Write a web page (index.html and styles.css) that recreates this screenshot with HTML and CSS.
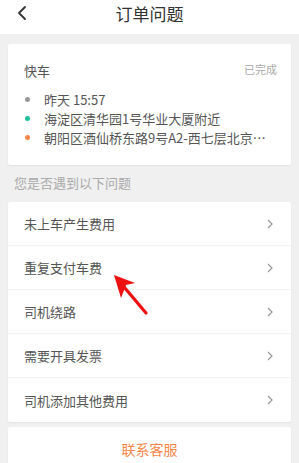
FILE: index.html
```html
<!DOCTYPE html>
<html lang="zh">
<head>
<meta charset="utf-8">
<link rel="stylesheet" href="styles.css">
</head>
<body>
<div class="page">
  <header class="topbar">
    <svg class="back" width="12" height="16" viewBox="0 0 12 16"><path d="M9 2 L3 8 L9 14" fill="none" stroke="#333" stroke-width="1.8" stroke-linecap="round" stroke-linejoin="round"/></svg>
    <h1 class="title">订单问题</h1>
  </header>
  <main class="main">
    <section class="card order">
      <div class="order-head">
        <span class="order-type">快车</span>
        <span class="order-status">已完成</span>
      </div>
      <ul class="order-info">
        <li><span class="dot dot-gray"></span>昨天 15:57</li>
        <li><span class="dot dot-green"></span>海淀区清华园1号华业大厦附近</li>
        <li><span class="dot dot-orange"></span>朝阳区酒仙桥东路9号A2-西七层北京…</li>
      </ul>
    </section>
    <div class="section-label">您是否遇到以下问题</div>
    <section class="card list">
      <div class="row"><span>未上车产生费用</span><svg class="chev" width="6" height="10" viewBox="0 0 6 10"><path d="M1 1 L5 5 L1 9" fill="none" stroke="#999" stroke-width="1.2"/></svg></div>
      <div class="row"><span>重复支付车费</span><svg class="chev" width="6" height="10" viewBox="0 0 6 10"><path d="M1 1 L5 5 L1 9" fill="none" stroke="#999" stroke-width="1.2"/></svg></div>
      <div class="row"><span>司机绕路</span><svg class="chev" width="6" height="10" viewBox="0 0 6 10"><path d="M1 1 L5 5 L1 9" fill="none" stroke="#999" stroke-width="1.2"/></svg></div>
      <div class="row"><span>需要开具发票</span><svg class="chev" width="6" height="10" viewBox="0 0 6 10"><path d="M1 1 L5 5 L1 9" fill="none" stroke="#999" stroke-width="1.2"/></svg></div>
      <div class="row"><span>司机添加其他费用</span><svg class="chev" width="6" height="10" viewBox="0 0 6 10"><path d="M1 1 L5 5 L1 9" fill="none" stroke="#999" stroke-width="1.2"/></svg></div>
    </section>
    <section class="card contact">联系客服</section>
  </main>
  <svg class="annot" width="299" height="463" viewBox="0 0 299 463">
    <line x1="146" y1="313" x2="119" y2="281" stroke="#ee1111" stroke-width="3.2" stroke-linecap="round"/>
    <polygon points="114,275 135,283 126,285 121,298" fill="#ee1111"/>
  </svg>
</div>
</body>
</html>
```
FILE: styles.css
```css
* { box-sizing: border-box; }
html, body { margin: 0; padding: 0; }
body {
  width: 299px;
  height: 463px;
  overflow: hidden;
  font-family: "Noto Sans CJK SC", "Liberation Sans", sans-serif;
  background: #f0f0f0;
}
.page { position: relative; height: 463px; }
.topbar {
  height: 34px;
  background: #fff;
  display: flex;
  align-items: center;
  justify-content: center;
  position: relative;
}
.back { position: absolute; left: 16px; top: 5px; }
.title {
  margin: 0;
  font-size: 17px;
  font-weight: normal;
  color: #333;
  line-height: 20px;
  margin-top: -6px;
}
.main { padding: 10px 8px 0; }
.card {
  background: #fff;
  border-radius: 2px;
  box-shadow: 0 1px 2px rgba(0,0,0,0.06);
}
.order { padding: 18px 14px 18px 16px; height: 121px; }
.order-head {
  display: flex;
  justify-content: space-between;
  align-items: flex-start;
  height: 18px;
}
.order-type { font-size: 13px; line-height: 18px; color: #555; }
.order-status { font-size: 11px; line-height: 14px; color: #aaa; }
.order-info { list-style: none; margin: 10px 0 0; padding: 0; }
.order-info li {
  display: flex;
  align-items: center;
  font-size: 13px;
  line-height: 19px;
  height: 19px;
  color: #555;
  white-space: nowrap;
}
.dot {
  width: 5px; height: 5px; border-radius: 50%;
  margin: 0 14px 0 1px;
  flex: none;
}
.dot-gray { background: #999; }
.dot-green { background: #1dbf9f; }
.dot-orange { background: #f8864a; }
.section-label {
  padding: 9px 6px 11px;
  font-size: 13px;
  line-height: 17px;
  color: #aaa;
}
.list { overflow: hidden; }
.row {
  height: 44px;
  display: flex;
  align-items: center;
  justify-content: space-between;
  padding: 0 18px 0 16px;
  font-size: 13px;
  color: #555;
  border-bottom: 1px solid #f3f3f3;
}
.row:last-child { border-bottom: none; }
.contact {
  margin-top: 5px;
  height: 44px;
  display: flex;
  align-items: center;
  justify-content: center;
  font-size: 14px;
  color: #f8864a;
}
.annot { position: absolute; left: 0; top: 0; pointer-events: none; }
```
